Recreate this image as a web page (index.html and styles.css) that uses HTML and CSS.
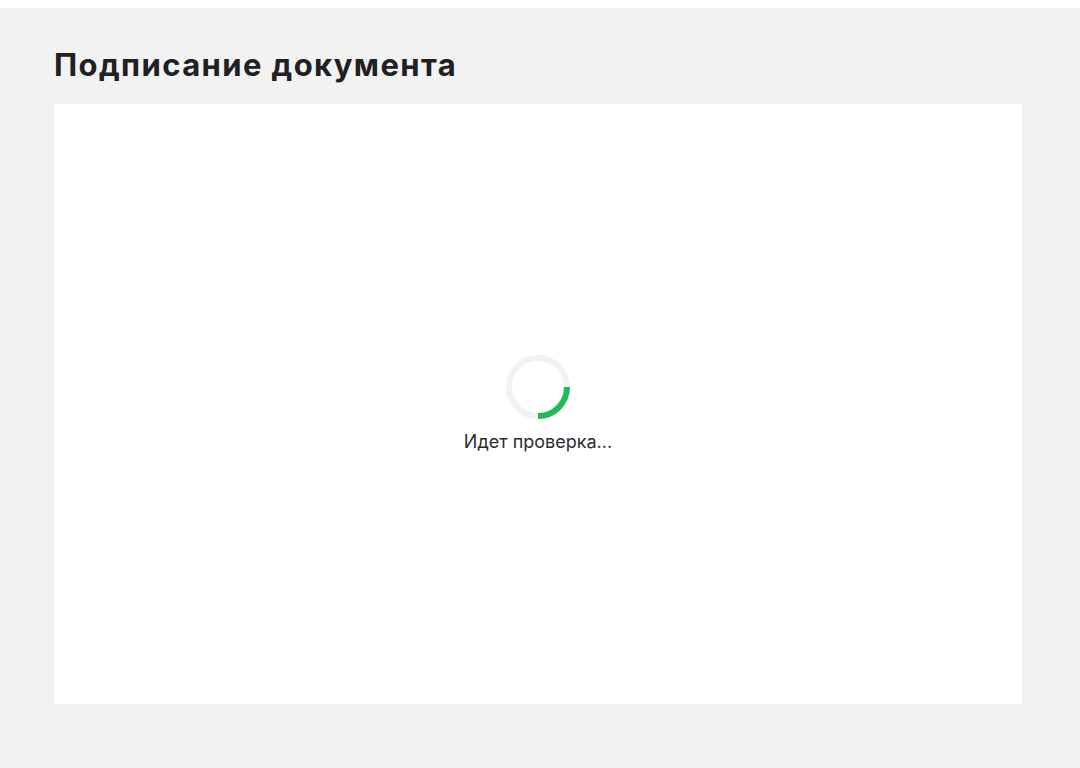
FILE: index.html
```html
<!DOCTYPE html>
<html lang="ru">
<head>
    <meta charset="UTF-8">
    <meta name="viewport" content="width=device-width, initial-scale=1.0">
    <title>Подписание документа</title>
    <link rel="stylesheet" href="styles.css">
</head>
<body>
    <div class="page">
        <h1 class="page-title">Подписание документа</h1>
        <div class="card">
            <div class="loader">
                <svg class="spinner" width="64" height="64" viewBox="0 0 64 64">
                    <circle cx="32" cy="32" r="29" fill="none" stroke="#f2f2f2" stroke-width="6"/>
                    <path d="M61 32 A29 29 0 0 1 32 61" fill="none" stroke="#21ba58" stroke-width="6"/>
                </svg>
                <p class="loader-text">Идет проверка...</p>
            </div>
        </div>
    </div>
</body>
</html>
```

FILE: styles.css
```css
:root {
    --bg-color: #f2f2f2;
    --text-color: #1f2024;
}

body {
    margin: 0;
    padding-top: 8px;
    background-color: #fff;
    font-family: 'Inter', 'Noto Sans', sans-serif;
    color: var(--text-color);
}

.page {
    background-color: var(--bg-color);
    min-height: 760px;
    padding: 37px 58px 0 54px;
    box-sizing: border-box;
}

.page-title {
    margin: 0 0 19px;
    font-size: 31px;
    line-height: 40px;
    font-weight: 700;
    letter-spacing: 1.4px;
}

.card {
    background-color: #fff;
    height: 600px;
    display: flex;
    align-items: center;
    justify-content: center;
}

.loader {
    display: flex;
    flex-direction: column;
    align-items: center;
}

.spinner {
    display: block;
}

.loader-text {
    margin: 12px 0 0;
    font-size: 18px;
    line-height: 22px;
    color: #2b2c30;
}
```
